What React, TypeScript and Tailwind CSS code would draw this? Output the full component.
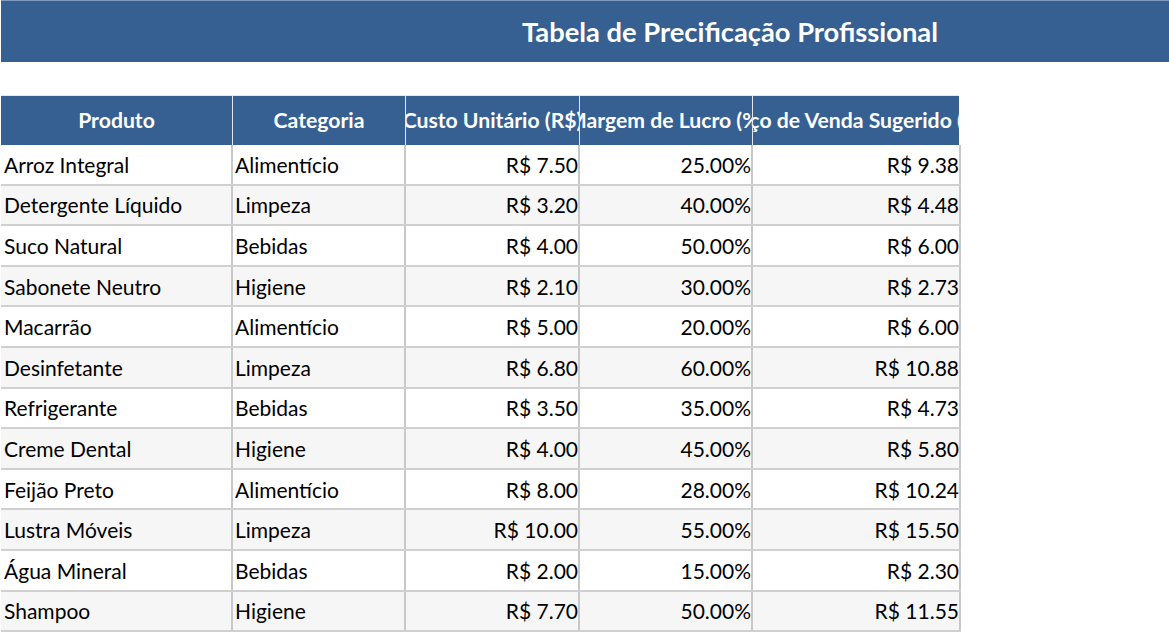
import * as React from "react";

interface Row {
  produto: string;
  categoria: string;
  custo: string;
  margem: string;
  preco: string;
}

const ROWS: Row[] = [
  { produto: "Arroz Integral", categoria: "Alimentício", custo: "R$ 7.50", margem: "25.00%", preco: "R$ 9.38" },
  { produto: "Detergente Líquido", categoria: "Limpeza", custo: "R$ 3.20", margem: "40.00%", preco: "R$ 4.48" },
  { produto: "Suco Natural", categoria: "Bebidas", custo: "R$ 4.00", margem: "50.00%", preco: "R$ 6.00" },
  { produto: "Sabonete Neutro", categoria: "Higiene", custo: "R$ 2.10", margem: "30.00%", preco: "R$ 2.73" },
  { produto: "Macarrão", categoria: "Alimentício", custo: "R$ 5.00", margem: "20.00%", preco: "R$ 6.00" },
  { produto: "Desinfetante", categoria: "Limpeza", custo: "R$ 6.80", margem: "60.00%", preco: "R$ 10.88" },
  { produto: "Refrigerante", categoria: "Bebidas", custo: "R$ 3.50", margem: "35.00%", preco: "R$ 4.73" },
  { produto: "Creme Dental", categoria: "Higiene", custo: "R$ 4.00", margem: "45.00%", preco: "R$ 5.80" },
  { produto: "Feijão Preto", categoria: "Alimentício", custo: "R$ 8.00", margem: "28.00%", preco: "R$ 10.24" },
  { produto: "Lustra Móveis", categoria: "Limpeza", custo: "R$ 10.00", margem: "55.00%", preco: "R$ 15.50" },
  { produto: "Água Mineral", categoria: "Bebidas", custo: "R$ 2.00", margem: "15.00%", preco: "R$ 2.30" },
  { produto: "Shampoo", categoria: "Higiene", custo: "R$ 7.70", margem: "50.00%", preco: "R$ 11.55" },
];

const HEADERS = [
  "Produto",
  "Categoria",
  "Custo Unitário (R$)",
  "Margem de Lucro (%)",
  "Preço de Venda Sugerido (R$)",
];

const HEAD_COLS = "grid grid-cols-[232px_173px_174px_173px_206px]";
const BODY_COLS = "grid grid-cols-[232px_173px_174px_173px_208px]";

export default function App() {
  return (
    <div className="w-[1169px] h-[634px] overflow-hidden bg-white text-black font-['Lato','Open_Sans',sans-serif]">
      {/* Banner */}
      <div className="ml-px h-[62px] border-t border-[#7f9cc0] bg-[#366092] flex items-center justify-center pl-[290px]">
        <h1 className="text-[27.3px] font-bold text-white leading-none">Tabela de Precificação Profissional</h1>
      </div>

      {/* Table */}
      <div className="mt-[33px] ml-px w-[960px]">
        <div className={`${HEAD_COLS} w-[958px] h-[50px] bg-[#366092] border-t border-[#e4eaf2]`}>
          {HEADERS.map((h, i) => (
            <div
              key={h}
              className={`flex items-center justify-center overflow-hidden whitespace-nowrap text-[21.2px] font-bold text-white ${i < 4 ? "border-r border-[#dfe6ef]" : ""}`}
            >
              <span>{h}</span>
            </div>
          ))}
        </div>
        {ROWS.map((r, idx) => (
          <div
            key={r.produto}
            className={`${BODY_COLS} h-[40.6px] text-[21px] leading-none border-b-2 border-[#d0d0d0] ${idx % 2 === 1 ? "bg-[#f6f6f6]" : "bg-white"}`}
          >
            <div className="flex items-center pl-[3px] border-r-2 border-[#c8c8c8] whitespace-nowrap overflow-hidden">{r.produto}</div>
            <div className="flex items-center pl-[2px] border-r-2 border-[#c8c8c8] whitespace-nowrap overflow-hidden">{r.categoria}</div>
            <div className="flex items-center justify-end border-r-2 border-[#c8c8c8] whitespace-nowrap">{r.custo}</div>
            <div className="flex items-center justify-end border-r-2 border-[#c8c8c8] whitespace-nowrap">{r.margem}</div>
            <div className="flex items-center justify-end border-r-2 border-[#c8c8c8] whitespace-nowrap">{r.preco}</div>
          </div>
        ))}
      </div>
    </div>
  );
}
